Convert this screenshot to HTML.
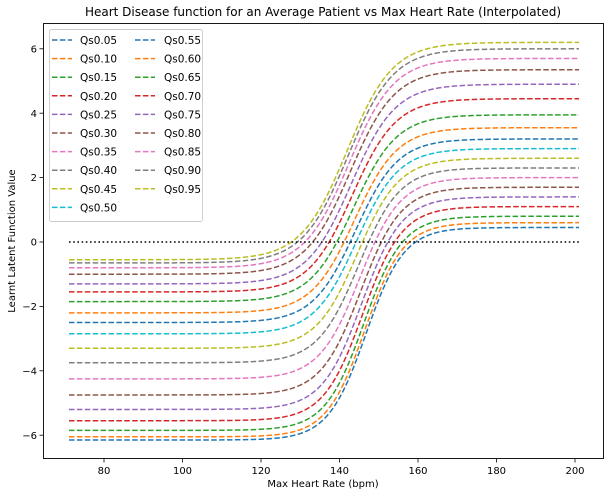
<!DOCTYPE html>
<html><head><meta charset="utf-8"><style>
body{margin:0;background:#fff}
svg text{font-family:"DejaVu Sans","Liberation Sans",sans-serif;fill:#000}
</style></head><body>
<svg id="s" width="608" height="496" viewBox="0 0 608 496" xmlns="http://www.w3.org/2000/svg">
<rect width="608" height="496" fill="#fff"/>
<text x="323" y="16" font-size="12" text-anchor="middle">Heart Disease function for an Average Patient vs Max Heart Rate (Interpolated)</text>
<g id="curves"></g>
<line x1="69" y1="242" x2="579" y2="242" stroke="#000" stroke-width="1.6" stroke-dasharray="1.6,2.6"/>
<rect x="43.5" y="23.5" width="560" height="435" fill="none" stroke="#000" stroke-width="0.9"/>
<g id="ticks" font-size="10"></g>
<text x="323" y="487" font-size="10" text-anchor="middle">Max Heart Rate (bpm)</text>
<text transform="translate(15,241) rotate(-90)" font-size="10" text-anchor="middle">Learnt Latent Function Value</text>
<rect x="49.5" y="29.5" width="153" height="192" rx="2" fill="#fff" fill-opacity="0.8" stroke="#ccc" stroke-width="0.9"/>
<g id="legend" font-size="10.5"></g>
</svg>
<script>
var C=["#1f77b4","#ff7f0e","#2ca02c","#d62728","#9467bd","#8c564b","#e377c2","#7f7f7f","#bcbd22","#17becf"];
var H=[0.45,0.6,0.8,1.1,1.4,1.7,2.0,2.3,2.6,2.9,3.2,3.55,3.95,4.45,4.9,5.35,5.7,6.0,6.2];
var L=[-6.15,-6.05,-5.85,-5.55,-5.2,-4.75,-4.25,-3.75,-3.3,-2.85,-2.5,-2.2,-1.85,-1.55,-1.3,-1.0,-0.8,-0.65,-0.55];
var ns="http://www.w3.org/2000/svg";
function Y(v){return 242-32.2*v}
var g=document.getElementById("curves"),lg=document.getElementById("legend"),tk=document.getElementById("ticks");
function el(t,a,p){var e=document.createElementNS(ns,t);for(var k in a)e.setAttribute(k,a[k]);p.appendChild(e);return e}
for(var i=0;i<19;i++){
 var cp=366-19*i/18, sp=19+4*i/18, d="";
 for(var x=69;x<=579;x+=2){var f=1/(1+Math.exp(-(x-cp)/sp));var y=Y(L[i]+(H[i]-L[i])*f);d+=(x==69?"M":"L")+x+","+y.toFixed(2)}
 el("path",{d:d,fill:"none",stroke:C[i%10],"stroke-width":1.5,"stroke-dasharray":"5.5,2.4"},g);
 var col=i<10?0:1,row=i<10?i:i-10,ly=40+row*18.6;
 var x0=col?135:52;
 el("line",{x1:x0,y1:ly,x2:x0+20,y2:ly,stroke:C[i%10],"stroke-width":1.5,"stroke-dasharray":"5.5,2.4"},lg);
 var t=el("text",{x:col?164:80,y:ly+4},lg);t.textContent="Qs"+((i+1)*0.05).toFixed(2);
}
for(var b=80;b<=200;b+=20){var x=104+(b-80)*3.925;el("line",{x1:x,y1:459,x2:x,y2:462.5,stroke:"#000","stroke-width":0.8},tk);var t=el("text",{x:x,y:474,"text-anchor":"middle"},tk);t.textContent=b}
for(var v=-6;v<=6;v+=2){var y=Y(v);el("line",{x1:39.5,y1:y,x2:43,y2:y,stroke:"#000","stroke-width":0.8},tk);var t=el("text",{x:37,y:y+3.6,"text-anchor":"end"},tk);t.textContent=(v<0?"\u2212"+(-v):v)}
</script>
</body></html>
